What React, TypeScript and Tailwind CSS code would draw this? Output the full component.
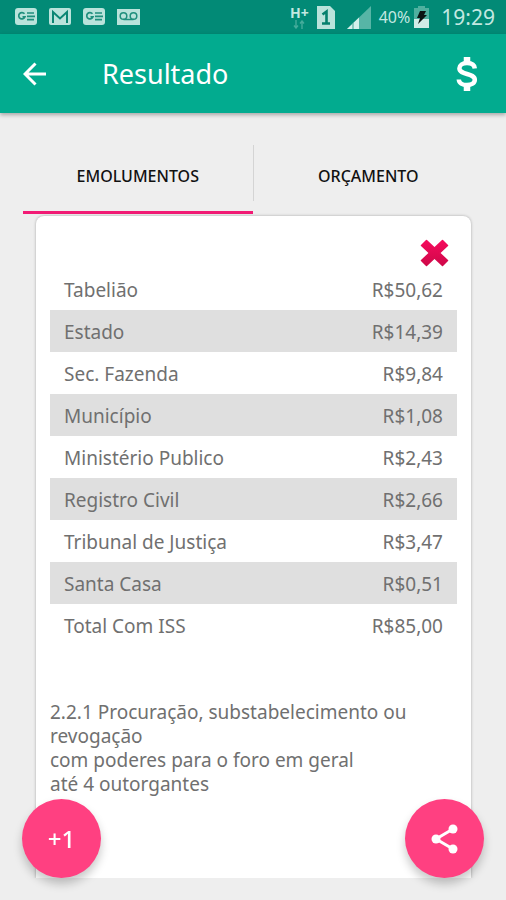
import type { ReactNode } from "react";

const fees: [string, string][] = [
  ["Tabelião", "R$50,62"],
  ["Estado", "R$14,39"],
  ["Sec. Fazenda", "R$9,84"],
  ["Município", "R$1,08"],
  ["Ministério Publico", "R$2,43"],
  ["Registro Civil", "R$2,66"],
  ["Tribunal de Justiça", "R$3,47"],
  ["Santa Casa", "R$0,51"],
  ["Total Com ISS", "R$85,00"],
];

function NewsIcon() {
  return (
    <svg width="22" height="18" viewBox="0 0 22 18" aria-hidden="true">
      <rect width="22" height="17" rx="3" fill="#b9e3db" />
      <path d="M9.5 5.8A3.2 3.2 0 1 0 10 8.8H7.5" fill="none" stroke="#1f8f7d" strokeWidth="1.7" />
      <path d="M12 5h7M12 8.3h8M12 11.6h7" stroke="#1f8f7d" strokeWidth="1.7" />
    </svg>
  );
}

function MailIcon() {
  return (
    <svg width="22" height="18" viewBox="0 0 22 18" aria-hidden="true">
      <rect width="22" height="17" rx="2" fill="#b9e3db" />
      <path d="M4 15V4l7 6.5L18 4v11" fill="none" stroke="#0a8673" strokeWidth="2" />
    </svg>
  );
}

function VoicemailIcon() {
  return (
    <svg width="23" height="18" viewBox="0 0 23 18" aria-hidden="true">
      <rect width="23" height="16" y="1" fill="#b9e3db" />
      <circle cx="6.5" cy="8" r="3.3" fill="none" stroke="#1f8f7d" strokeWidth="1.5" />
      <circle cx="16.5" cy="8" r="3.3" fill="none" stroke="#1f8f7d" strokeWidth="1.5" />
      <path d="M6.5 11.5h10" stroke="#1f8f7d" strokeWidth="1.5" />
    </svg>
  );
}

function StatusBar() {
  return (
    <div className="flex h-[34px] items-center justify-between bg-[#028a76] pl-[15px] pr-[11px] text-[#c3e8e1]">
      <div className="flex items-center gap-3">
        <NewsIcon />
        <MailIcon />
        <NewsIcon />
        <VoicemailIcon />
      </div>
      <div className="flex items-center">
        <div className="flex flex-col items-center">
          <span className="text-[14px] font-bold leading-[14px]">H+</span>
          <svg width="12" height="9" viewBox="0 0 12 9" fill="none" stroke="#45ac9b" strokeWidth="1.4" aria-hidden="true">
            <path d="M3 0v8M1 5.5 3 8l2-2.500M9 9V1M7 3.500 9 1l2 2.500" />
          </svg>
        </div>
        <svg className="ml-2" width="18" height="23" viewBox="0 0 18 23" aria-hidden="true">
          <path d="M0 0h13l5 5v18H0z" fill="#b9e3db" />
          <path d="M5.500 8.500 9.500 5.500V17M5 17.500h8" fill="none" stroke="#04806d" strokeWidth="2.600" />
        </svg>
        <svg className="ml-3" width="24" height="24" viewBox="0 0 24 24" aria-hidden="true">
          <path d="M0 24 24 1v23z" fill="#57b5a6" />
          <path d="M0 24 12 12.500V24z" fill="#d5f0eb" />
          <path d="M6 18v6" stroke="#3fa493" strokeWidth="1" />
        </svg>
        <span className="ml-2 text-[16px] leading-6">40%</span>
        <svg className="ml-1" width="15" height="22" viewBox="0 0 15 22" aria-hidden="true">
          <path d="M4 0h7v2h4v20H0V2h4z" fill="#4fb09f" />
          <path d="M0 13h15v9H0z" fill="#d0ece7" />
          <path d="M6 5h6l-2 4h3L4 18l2-6H3z" fill="#0b1513" />
        </svg>
        <span className="ml-3 text-[21px] leading-6">19:29</span>
      </div>
    </div>
  );
}

function Fab({ label, children }: { label: string; children: ReactNode }) {
  return (
    <button
      type="button"
      aria-label={label}
      className="pointer-events-auto flex size-[79px] items-center justify-center rounded-full bg-[#ff4081] text-white shadow-[0_6px_10px_rgba(0,0,0,0.22)]"
    >
      {children}
    </button>
  );
}

export default function App() {
  return (
    <div className="flex min-h-screen flex-col bg-[#eeeeee] font-['Noto_Sans',sans-serif]">
      <StatusBar />
      <header className="flex h-[79px] items-center bg-[#02ab8f] pl-[23px] pr-7 text-white shadow-[0_2px_4px_rgba(0,0,0,0.3)]">
        <button type="button" aria-label="Voltar">
          <svg width="24" height="24" viewBox="0 0 24 24" fill="none" stroke="currentColor" strokeWidth="3" aria-hidden="true">
            <path d="M23 12H2.500M12.500 1.500 2 12l10.500 10.500" />
          </svg>
        </button>
        <h1 className="ml-[55px] flex-1 text-[27px] leading-8">Resultado</h1>
        <button type="button" aria-label="Preço">
          <svg width="22" height="34" viewBox="0 0 22 34" fill="none" stroke="currentColor" aria-hidden="true">
            <path d="M18.800 11.500C18.500 8 15.500 6 11 6S3.400 8.300 3.400 11.300c0 3.600 3.600 4.600 7.600 5.700s7.800 2.200 7.800 5.800c0 3.400-3.300 5.200-7.800 5.200s-8-1.800-8.200-5.500" strokeWidth="4.500" />
            <path d="M11 0v6M11 28v6" strokeWidth="6.500" />
          </svg>
        </button>
      </header>

      <nav role="tablist" className="mx-[23px] mt-6 flex h-[77px] text-[16px] font-medium text-[#111111]">
        <button type="button" role="tab" aria-selected="true" className="flex-1 border-b-[3px] border-[#f21b75] pt-[3px]">
          EMOLUMENTOS
        </button>
        <span className="mt-2 h-14 w-px bg-[#d4d4d4]" />
        <button type="button" role="tab" aria-selected="false" className="flex-1 border-b-[3px] border-transparent pt-[3px]">
          ORÇAMENTO
        </button>
      </nav>

      <main className="ml-9 mr-[35px] mb-[22px] mt-[2px] flex-1 rounded-t-lg bg-white px-[14px] text-[#707070] shadow-[0_0_3px_rgba(0,0,0,0.3)] [clip-path:inset(-4px_-4px_0_-4px)]">
        <div className="flex h-[52px] items-end justify-end pb-px pr-2">
          <button type="button" aria-label="Fechar">
            <svg width="29" height="28" viewBox="0 0 29 28" aria-hidden="true">
              <defs>
                <linearGradient id="close" x1="0" y1="0" x2="0" y2="1">
                  <stop offset="0" stopColor="#f50a5c" />
                  <stop offset="1" stopColor="#cf0849" />
                </linearGradient>
              </defs>
              <path
                d="M6.500 1.500 14.500 9l8-7.500 5 5-8 7.500 8 7.500-5 5-8-7.500-8 7.500-5-5 8-7.500-8-7.500z"
                fill="url(#close)"
                stroke="url(#close)"
                strokeWidth="1.500"
                strokeLinejoin="round"
              />
            </svg>
          </button>
        </div>
        <table className="w-full text-[19px] leading-6">
          <tbody>
            {fees.map(([name, value]) => (
              <tr key={name} className="h-[42px] even:bg-[#dfdfdf]">
                <th scope="row" className="pl-[14px] pt-px text-left font-normal">{name}</th>
                <td className="pr-[14px] pt-px text-right">{value}</td>
              </tr>
            ))}
          </tbody>
        </table>
        <p className="mt-[54px] text-[19px] leading-6">
          2.2.1 Procuração, substabelecimento ou revogação
          <br />
          com poderes para o foro em geral
          <br />
          até 4 outorgantes
        </p>
      </main>

      <div className="pointer-events-none fixed inset-x-0 bottom-[22px] flex justify-between px-[22px]">
        <Fab label="Mais um">
          <span className="text-[24px] font-medium leading-8">+1</span>
        </Fab>
        <Fab label="Compartilhar">
          <svg width="27" height="30" viewBox="0 0 27 30" fill="currentColor" aria-hidden="true">
            <path d="M22 5 5 15l17 10" fill="none" stroke="currentColor" strokeWidth="3" />
            <circle cx="22" cy="5" r="4.500" />
            <circle cx="5" cy="15" r="4.500" />
            <circle cx="22" cy="25" r="4.500" />
          </svg>
        </Fab>
      </div>
    </div>
  );
}
